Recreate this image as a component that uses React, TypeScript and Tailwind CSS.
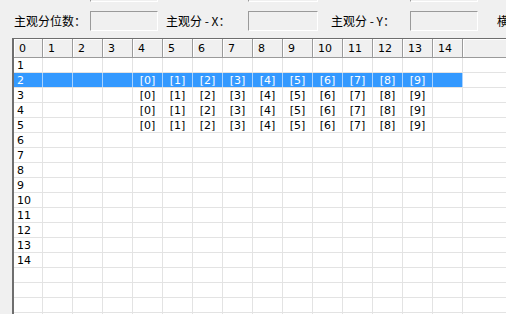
import React from 'react'

const COLS = Array.from({ length: 15 }, (_, i) => i)
const ROWS = Array.from({ length: 18 }, (_, i) => i + 1)

function SunkenBox({ className = '' }: { className?: string }) {
  return (
    <div
      className={`h-[20px] shrink-0 border border-t-[#9a9a9a] border-l-[#9a9a9a] border-b-white border-r-white bg-[#f0f0f0] ${className}`}
    />
  )
}

function FieldRow({ labels }: { labels: boolean }) {
  const label = "shrink-0 text-[12px] leading-[20px] text-black font-['Noto_Sans_CJK_SC',sans-serif] whitespace-nowrap"
  return (
    <div className="flex h-[20px] items-center">
      <div className={`w-[90px] pl-[14px] ${label}`}>{labels ? '主观分位数：' : ''}</div>
      <SunkenBox className="w-[68px]" />
      <div className={`ml-[8px] w-[82px] ${label}`}>{labels ? '主观分 - X：' : ''}</div>
      <SunkenBox className="w-[70px]" />
      <div className={`ml-[13px] w-[79px] ${label}`}>{labels ? '主观分 - Y：' : ''}</div>
      <SunkenBox className="w-[68px]" />
      <div className={`ml-[19px] ${label}`}>{labels ? '横' : ''}</div>
    </div>
  )
}

function cellText(row: number, col: number) {
  if (col === 0) return row <= 14 ? String(row) : ''
  if (row >= 2 && row <= 5 && col >= 4 && col <= 13) return `[${col - 4}]`
  return ''
}

export default function App() {
  return (
    <div className="w-[506px] h-[314px] overflow-hidden bg-[#f0f0f0] font-['DejaVu_Sans',sans-serif] text-[11px] text-black">
      {/* form strip */}
      <div className="h-[38px] overflow-hidden">
        <div className="-mt-[18px] flex flex-col gap-[9px]">
          <FieldRow labels={false} />
          <FieldRow labels />
        </div>
      </div>

      {/* grid */}
      <div className="ml-[12px] border-l-2 border-t border-[#6e6e6e] bg-white">
        <div className="flex h-[19px] border-b border-[#9a9a9a] bg-[#f0f0f0]">
          {COLS.map((c) => (
            <div
              key={c}
              className={`${c === 0 ? 'w-[29px]' : 'w-[30px]'} shrink-0 border-r border-[#9a9a9a] shadow-[inset_1px_1px_0_#ffffff] pl-[5px] leading-[19px]`}
            >
              {c}
            </div>
          ))}
          <div className="flex-1 shadow-[inset_1px_1px_0_#ffffff]" />
        </div>

        {ROWS.map((r) => {
          const sel = r === 2
          return (
            <div key={r} className="flex h-[15px] border-b border-[#e3e3e3]">
              {COLS.map((c) => (
                <div
                  key={c}
                  className={`${c === 0 ? 'w-[29px] pl-[3px]' : 'w-[30px] text-center'} shrink-0 border-r leading-[15px] ${
                    sel ? 'bg-[#3399ff] text-white border-[#a9d2ff]' : 'border-[#e3e3e3]'
                  }`}
                >
                  {cellText(r, c)}
                </div>
              ))}
              <div className="flex-1" />
            </div>
          )
        })}
      </div>
    </div>
  )
}
